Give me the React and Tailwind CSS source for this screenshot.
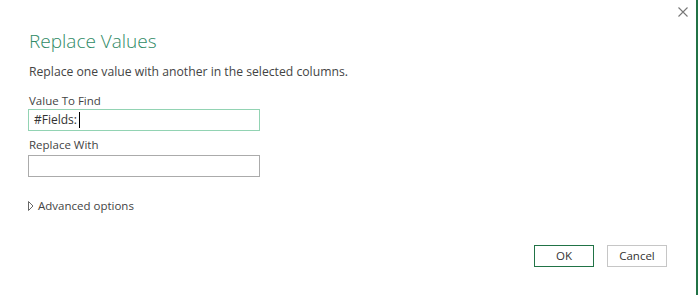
export default function App() {
  return (
    <div className="flex w-[699px] h-[295px] bg-white overflow-hidden" style={{ fontFamily: '"Open Sans", "Noto Sans", sans-serif' }}>
      <div className="relative flex-1 flex flex-col">
        <button className="absolute left-[677px] top-[6px] w-[11px] h-[11px] flex items-center justify-center">
          <svg width="10" height="10" viewBox="0 0 10 10">
            <path d="M0.5 0.5 L9.5 9.5 M9.5 0.5 L0.5 9.5" stroke="#777" strokeWidth="1.1" fill="none" />
          </svg>
        </button>
        <div className="pl-[29px] pt-[27px] flex flex-col">
          <h1 className="text-[19px] leading-[28px] font-light text-[#2f8a66]">Replace Values</h1>
          <p className="mt-[8px] text-[12.2px] leading-[18px] text-[#444]">Replace one value with another in the selected columns.</p>
          <label className="mt-[12px] text-[11.5px] leading-[16px] text-[#444]">Value To Find</label>
          <div className="-ml-[1px] w-[232px] h-[22px] border border-[#92d3b3] flex items-center pl-[5px] text-[12px] text-[#333]">
            #Fields:<span className="ml-[2px] w-[1px] h-[16px] bg-black" />
          </div>
          <label className="mt-[6px] text-[11.5px] leading-[16px] text-[#444]">Replace With</label>
          <div className="-ml-[1px] mt-[2px] w-[232px] h-[22px] border border-[#ababab]" />
          <div className="-ml-[1px] mt-[21px] flex items-center gap-[4px] text-[11.5px] leading-[16px] text-[#444]">
            <svg width="6" height="10" viewBox="0 0 6 10">
              <path d="M0.5 0.5 L5 5 L0.5 9.5 Z" stroke="#666" strokeWidth="1" fill="none" />
            </svg>
            <span>Advanced options</span>
          </div>
        </div>
        <div className="mt-[31px] flex justify-end gap-[13px] pr-[29px]">
          <button className="w-[60px] h-[22px] border border-[#217346] text-[11.5px] text-[#333]">OK</button>
          <button className="w-[60px] h-[22px] border border-[#c6c6c6] text-[11.5px] text-[#333]">Cancel</button>
        </div>
      </div>
      <div className="w-[2px] bg-[#217346]" />
      <div className="w-[1px]" />
    </div>
  );
}
